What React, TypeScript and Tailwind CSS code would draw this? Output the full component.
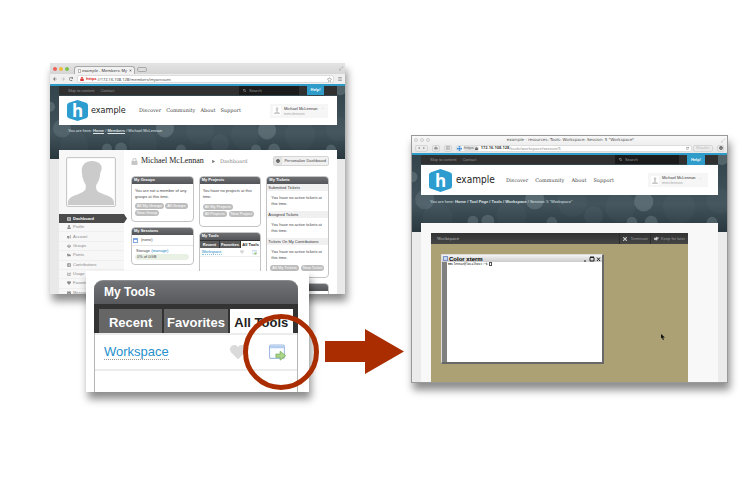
import type { ReactNode } from "react";
import {
  FaArrowLeft, FaArrowRight, FaBars, FaBullhorn, FaCaretDown, FaChartBar, FaCloud, FaCog, FaEnvelope, FaFolderOpen,
  FaHandPointRight, FaHeart, FaLock, FaPlay, FaRegStar, FaSearch, FaShareAltSquare, FaTimes, FaUser, FaUsers, FaRedo, FaGlobe,
} from "react-icons/fa";
import { FaTableCellsLarge } from "react-icons/fa6";

const sans = "font-['Liberation_Sans',Arial,sans-serif]";
const ui = "font-['Noto_Sans',sans-serif]";
const slab = "font-['DejaVu_Serif',serif]";

/* Out-of-focus light circles behind the site banner */
function Bokeh() {
  const dots: [number, number, number, number][] = [
    [12, 43, 9, 0.13], [0, 22, 5, 0.2], [24, 60, 14, 0.03], [57, 63, 5, 0.18], [71, 63, 6, 0.18], [93, 58, 14, 0.03],
    [115, 43, 9, 0.18], [131, 64, 5, 0.15], [150, 45, 14, 0.03], [170, 58, 9, 0.05], [195, 50, 14, 0.03],
    [217, 45, 9, 0.18], [206, 64, 5, 0.18], [224, 64, 6, 0.18], [250, 50, 15, 0.03], [281, 64, 5, 0.18], [290, 4, 7, 0.2], [288, 44, 12, 0.03],
  ];
  return (
    <svg className="absolute inset-0 size-full" viewBox="0 0 295 73" preserveAspectRatio="none" aria-hidden="true">
      <defs>
        <linearGradient id="sky" x1="0" y1="0" x2="0" y2="1">
          <stop offset="0" stopColor="#33434b" />
          <stop offset="0.65" stopColor="#43535b" />
          <stop offset="1" stopColor="#28373e" />
        </linearGradient>
      </defs>
      <rect width="295" height="73" fill="url(#sky)" />
      {dots.map(([x, y, r, o]) => (
        <circle key={`${x}-${y}`} cx={x} cy={y} r={r} fill="#c8dce2" fillOpacity={o} />
      ))}
    </svg>
  );
}

function Silhouette({ className }: { className: string }) {
  return (
    <svg className={className} viewBox="0 0 48 48" preserveAspectRatio="none" aria-hidden="true">
      <rect width="48" height="48" fill="#fff" />
      <path d="M25 2C17 2 13.500 8 14.500 14c.3 5 1.500 9 4 13 .5 5-1 6-4 8-6 3-14 4-14.500 10v3h48v-3c-.5-6-9-7-15-10-3-2-4-3-3.500-8 3-4 4-8 4.200-13C38 8 33 2 25 2z" fill="#cbcbcb" />
    </svg>
  );
}

function SiteBanner({ roomy, trail }: { roomy?: boolean; trail: ReactNode }) {
  return (
    <header className={`relative ${sans}`}>
      <Bokeh />
      <div className="relative border-t-2 border-[#2f9cca]">
        <div className={`ml-[9px] flex h-[9px] items-center bg-[#303030] pl-[9px] text-[4px] leading-none text-[#929292] ${roomy ? "mr-[9px]" : "mr-[8px]"}`}>
          <a href="#content">Skip to content</a>
          <a href="#contact" className="ml-[6px]">Contact</a>
          <label className={`ml-auto flex h-full items-center gap-[3px] bg-[#1b1b1b] pl-[4px] ${roomy ? "w-[64px]" : "w-[60px]"}`}>
            <FaSearch className="size-[3px] shrink-0" />
            <input aria-label="Search" placeholder="Search" className="w-full min-w-0 bg-transparent outline-none placeholder:text-[#929292]" />
          </label>
          <a href="#help" className={`mr-[13px] ml-[8px] flex h-[11px] items-center justify-center self-start bg-[#2f9cca] font-bold text-white ${roomy ? "-mt-px w-[18px]" : "-mt-[2px] w-[17px]"}`}>
            Help!
          </a>
        </div>
        <div className={`mt-px ml-[9px] flex items-center bg-white pl-[8px] ${roomy ? "mr-[9px] h-[30px] pr-[10px]" : "mr-[8px] h-[29px] pr-[9px]"}`}>
          <div className={`relative flex shrink-0 items-center justify-center ${roomy ? "size-[23px]" : "size-[21px]"}`}>
            <svg viewBox="0 0 22 22" className="absolute inset-0 size-full" aria-hidden="true">
              <path d="M11 0 20 3Q22 3.600 22 5.500v11Q22 18.400 20 19l-9 3-9-3Q0 18.400 0 16.500v-11Q0 3.600 2 3z" fill="#2d9ccf" />
            </svg>
            <span className="relative font-['Open_Sans',sans-serif] text-[17px] leading-none font-bold text-white">h</span>
          </div>
          <span className={`font-['DejaVu_Sans_Condensed',sans-serif] leading-none text-[#222] ${roomy ? "ml-[4px] w-[38px] text-[10px]" : "ml-[3px] w-[35px] text-[9px]"}`}>example</span>
          <nav className={`flex text-[5px] leading-none text-[#444] ${slab} ${roomy ? "ml-[12px] gap-[7px]" : "ml-[13px] gap-[5px]"}`}>
            <a href="#discover">Discover</a>
            <a href="#community">Community</a>
            <a href="#about">About</a>
            <a href="#support">Support</a>
          </nav>
          <button className={`ml-auto flex h-[14px] items-center bg-[#f6f6f6] pl-[3px] text-left text-[4px] leading-[5px] text-[#333] ${roomy ? "w-[60px]" : "w-[58px]"}`}>
            <Silhouette className="h-[9px] w-[8px] border border-white" />
            <span className="ml-[3px] whitespace-nowrap">
              Michael McLennan
              <span className="block text-[#aaa]">mmclennan</span>
            </span>
            <FaCaretDown className="mb-[4px] ml-[3px] size-[3px] text-[#ccc]" />
          </button>
        </div>
        <div className={`ml-[18px] flex items-center pb-px text-[4px] leading-none whitespace-nowrap text-[#dfe5e7] ${roomy ? "h-[14px]" : "h-[12px]"}`}>{trail}</div>
        <div className={roomy ? "h-[23px]" : "h-[22px]"} />
      </div>
    </header>
  );
}

function Card({ title, children, className = "" }: { title: string; children?: ReactNode; className?: string }) {
  return (
    <section className={`overflow-hidden rounded-[4px] border border-[#c4c4c4] bg-white ${className}`}>
      <h3 className="-mx-px -mt-px h-[8px] bg-linear-to-b from-[#727377] to-[#545559] pl-[3px] text-[4px] leading-[8px] font-bold text-white">{title}</h3>
      {children}
    </section>
  );
}

function Pill({ children }: { children: ReactNode }) {
  return <button className="h-[6px] rounded-full bg-[#bdbdbd] px-[2px] text-[4px] leading-[6px] whitespace-nowrap text-white">{children}</button>;
}

function TicketGroup({ title }: { title: string }) {
  return (
    <>
      <h4 className="h-[7px] bg-[#f0f0f0] pl-px text-[4px] leading-[7px] whitespace-nowrap text-[#333]">{title}</h4>
      <p className="h-[20px] pt-[4px] pl-[4px] leading-[6px]">You have no active tickets at this time.</p>
    </>
  );
}

const menu: [string, ReactNode][] = [
  ["Profile", <FaUser />], ["Account", <FaBullhorn />], ["Groups", <FaUsers />], ["Points", <FaFolderOpen />],
  ["Contributions", <FaShareAltSquare />], ["Usage", <FaChartBar />], ["Favorites", <FaHeart />], ["Messages", <FaEnvelope />],
];

function LaunchIcon({ className }: { className: string }) {
  return (
    <svg viewBox="0 0 16 16" className={className} aria-hidden="true">
      <rect x="0.500" y="1" width="14" height="12.500" rx="1" fill="#fbfdff" stroke="#9fbbe0" />
      <path d="M1 1.500h13v2.500H1z" fill="#b3cdf0" />
      <path d="M6.500 9.500h4V6.800L15.700 11l-5.200 4.200v-2.700h-4z" fill="#acd48a" stroke="#7fb25e" strokeWidth="0.800" />
    </svg>
  );
}

function MembersWindow() {
  return (
    <article className={`h-[231px] overflow-hidden bg-[#e9e9e9] shadow-[2px_7px_8px_rgba(0,0,0,0.45)] ${sans}`}>
      <div className={`bg-linear-to-b from-[#e4e4e4] to-[#c9c9c9] text-[4px] leading-none text-[#333] ${ui}`}>
        <div className="flex h-[11px] items-end gap-[2px] pl-[3px]">
          <i className="mb-[3px] size-[4px] rounded-full bg-[#ee6358]" />
          <i className="mb-[3px] size-[4px] rounded-full bg-[#f3b73d]" />
          <i className="mb-[3px] size-[4px] rounded-full bg-[#7fc24b]" />
          <div className="ml-[3px] flex h-[8px] items-center rounded-t-[3px] border border-b-0 border-[#a9a9a9] bg-[#f1f1f1] pl-[3px]">
            <span className="mr-px h-[4px] w-[3px] shrink-0 border border-[#bbb] bg-white" />
            <span className="whitespace-nowrap">example - Members: My</span>
            <FaTimes className="mx-[2px] size-[3px] shrink-0 text-[#777]" />
          </div>
          <span className="mb-[2px] h-[5px] w-[10px] rounded-[2px] border border-[#aaa] bg-[#dcdcdc]" />
          <span className="mr-[2px] mb-[3px] ml-auto text-[5px] text-[#777]">⤢</span>
        </div>
        <div className="flex h-[10px] items-center gap-[4px] bg-[#efefef] px-[3px] text-[5px] text-[#666]">
          <FaArrowLeft className="size-[4px]" />
          <FaArrowRight className="size-[4px] text-[#bbb]" />
          <FaRedo className="size-[4px]" />
          <div className="flex h-[8px] flex-1 items-center rounded-[2px] border border-[#ddd] bg-white pl-[2px] text-[4px]">
            <FaLock className="mr-[2px] size-[4px] text-[#d33]" />
            <span className="font-bold text-[#d33]">https</span>
            <input aria-label="Address" defaultValue="://172.16.108.128/members/myaccount" className="min-w-0 flex-1 bg-transparent text-[#444] outline-none" />
            <FaRegStar className="mr-px size-[5px] text-[#888]" />
          </div>
          <FaBars className="size-[4px]" />
        </div>
      </div>
      <SiteBanner
        trail={<>You are here:&nbsp;<a href="#home" className="font-bold underline">Home</a>&nbsp;/&nbsp;<a href="#members" className="font-bold underline">Members</a>&nbsp;/ Michael McLennan</>}
      />
      <div id="content" className="relative -mt-[9px] mr-[8px] ml-[9px] flex h-[150px] bg-white">
        <aside className="w-[65px] shrink-0 bg-[#f7f7f7] pt-[7px]">
          <Silhouette className="ml-[7px] h-[50px] w-[50px] rounded-[2px] border border-[#c9c9c9] p-px" />
          <nav className="mt-[7px] text-[4px] text-[#8a8a8a]">
            <a href="#dashboard" className="relative flex h-[9px] items-center gap-[2px] bg-[#4b4b4b] pl-[8px] font-bold text-white">
              <FaTableCellsLarge className="size-[4px]" /> Dashboard
              <svg className="absolute top-0 left-full h-[9px] w-[3px]" viewBox="0 0 3 9" aria-hidden="true"><path d="M0 0l3 4.500L0 9z" fill="#4b4b4b" /></svg>
            </a>
            <div className="grid h-[75px] auto-rows-fr">
              {menu.map(([name, icon]) => (
                <a key={name} href={`#${name}`} className="flex items-center gap-[2px] border-b border-[#efefef] pl-[8px]">
                  <span className="*:size-[4px]">{icon}</span>{name}
                </a>
              ))}
            </div>
          </nav>
        </aside>
        <div className="min-w-0 flex-1 pr-[8px] pl-[7px] text-[4px] leading-[6px] text-[#444]">
          <div className="flex h-[26px] items-center pb-[4px]">
            <FaLock className="size-[7px] text-[#c6c6c6]" />
            <h1 className="ml-[3px] w-[66px] font-['Liberation_Serif',serif] text-[8px] leading-none whitespace-nowrap text-[#222]">Michael McLennan</h1>
            <FaPlay className="ml-[5px] size-[3px] text-[#777]" />
            <h2 className={`ml-[5px] text-[5px] leading-none text-[#888] ${slab}`}>Dashboard</h2>
            <button className="ml-auto flex h-[10px] items-center rounded-[2px] border border-[#d5d5d5] bg-[#f1f1f1] text-[4px] whitespace-nowrap">
              <span className="flex h-full w-[8px] items-center justify-center bg-[#e2e2e2]"><FaCog className="size-[4px]" /></span>
              <span className="px-[2px]">Personalize Dashboard</span>
            </button>
          </div>
          <div className="grid grid-cols-3 items-start gap-[5px]">
            <div className="flex flex-col gap-[5px]">
              <Card title="My Groups" className="h-[46px]">
                <p className="px-[3px] pt-[4px] whitespace-nowrap">You are not a member of any<br />groups at this time.</p>
                <div className="flex flex-wrap gap-px pt-[3px] pl-[3px]"><Pill>All My Groups</Pill><Pill>All Groups</Pill><Pill>New Group</Pill></div>
              </Card>
              <Card title="My Sessions" className="h-[38px]">
                <div className="flex h-[11px] items-center gap-[3px] border-b border-[#e5e5e5] pl-px"><span className="size-[5px] border border-t-2 border-[#7fa7e6]" />(none)</div>
                <p className="pt-[2px] pl-[4px] leading-[6px]">Storage <a href="#manage" className="text-[#2389bf]">(manage)</a></p>
                <p className="mr-[4px] ml-[3px] rounded-full bg-[#e9f0e4] pl-[2px]">0% of 0GB</p>
              </Card>
            </div>
            <div className="flex flex-col gap-[5px]">
              <Card title="My Projects" className="h-[51px]">
                <p className="px-[3px] pt-[4px]">You have no projects at this time.</p>
                <div className="flex pt-[4px] pl-[3px]"><Pill>All My Projects</Pill></div>
                <div className="flex gap-[2px] pt-px pl-[3px]"><Pill>All Projects</Pill><Pill>New Project</Pill></div>
              </Card>
              <Card title="My Tools" className="h-[60px]">
                <div className="flex h-[8px] gap-px bg-[#333] pt-px text-center text-[4px] leading-[7px] font-bold text-white">
                  <span className="flex-1 bg-[#5c5c5c]">Recent</span><span className="flex-1 bg-[#5c5c5c]">Favorites</span><span className="flex-1 bg-white text-[#222]">All Tools</span>
                </div>
                <div className="flex h-[9px] items-center border-b border-[#eee] pr-[3px] pl-[2px]">
                  <a href="#workspace" className="border-b border-dotted border-[#8dc3df] leading-[4px] text-[#2389bf]">Workspace</a>
                  <FaHeart className="mr-[8px] ml-auto size-[4px] text-[#d6d6d6]" />
                  <LaunchIcon className="size-[5px]" />
                </div>
              </Card>
            </div>
            <div className="flex flex-col gap-[5px]">
              <Card title="My Tickets" className="h-[102px]">
                <TicketGroup title="Submitted Tickets" /><TicketGroup title="Assigned Tickets" /><TicketGroup title="Tickets On My Contributions" />
                <div className="flex gap-[2px] pl-[3px]"><Pill>All My Tickets</Pill><Pill>New Ticket</Pill></div>
              </Card>
              <Card title="" className="h-[40px]" />
            </div>
          </div>
        </div>
      </div>
    </article>
  );
}

/* Enlarged view of the tool list, with the launch icon ringed */
function ToolsCallout() {
  return (
    <aside className={`absolute top-[208px] left-[36px] w-[223px] bg-white pt-[9px] pr-[11px] pl-[8px] shadow-[2px_7px_8px_rgba(0,0,0,0.45)] ${sans}`}>
      <div className="h-[112px] rounded-t-[9px] border-x border-[#b5b5b5]">
        <h2 className="-mx-px h-[24px] rounded-t-[9px] border-t border-[#8a8b8e] bg-linear-to-b from-[#727377] to-[#58595d] pl-[10px] text-[12px] leading-[23px] font-bold text-white">My Tools</h2>
        <div className="-mx-px flex h-[29px] gap-[2px] bg-[#333] px-[5px] pt-[5px] text-[13px] leading-[28px] font-bold text-white">
          <button className="flex-1 bg-[#666]">Recent</button>
          <button className="flex-1 bg-[#666]">Favorites</button>
          <button className="flex-1 bg-white text-[#222]">All Tools</button>
        </div>
        <div className="flex h-[38px] items-center border-y-2 border-[#ececec] pr-[11px] pl-[9px]">
          <a href="#workspace" className="border-b border-dotted border-[#999] text-[13px] leading-[15px] text-[#2590cc]">Workspace</a>
          <FaHeart className="mr-[23px] ml-auto size-[16px] text-[#dadada]" />
          <LaunchIcon className="size-[17px]" />
        </div>
      </div>
      <span className="absolute top-[43px] left-[157px] size-[76px] rounded-full border-[5px] border-[#a92d00]" />
    </aside>
  );
}

function WorkspaceWindow() {
  return (
    <article className={`mt-[72px] h-[248px] overflow-hidden border border-[#999] bg-[#ebebeb] shadow-[2px_7px_8px_rgba(0,0,0,0.45)] ${sans}`}>
      <div className={`h-[17px] bg-linear-to-b from-[#f8f8f8] to-[#e6e6e6] text-[4px] leading-none text-[#555] ${ui}`}>
        <div className="flex h-[8px] items-center gap-[2px] pl-[2px]">
          <i className="size-[4px] rounded-full border border-[#ccc]" />
          <i className="size-[4px] rounded-full border border-[#ccc]" />
          <i className="size-[4px] rounded-full border border-[#ccc]" />
          <p className="flex-1 pr-[10px] text-center font-['DejaVu_Sans',sans-serif] whitespace-nowrap">example - resources: Tools: Workspace: Session: 5 "Workspace"</p>
          <span className="mr-[2px] text-[5px] text-[#999]">⤢</span>
        </div>
        <div className="flex h-[9px] items-center gap-[4px] px-[3px] pb-px">
          <span className="flex h-[7px] w-[13px] items-center justify-around rounded-[2px] border border-[#d5d5d5] text-[#999]"><FaPlay className="size-[2px] rotate-180" /><FaPlay className="size-[2px]" /></span>
          <span className="flex h-[7px] w-[8px] items-center justify-center rounded-[2px] border border-[#d5d5d5]"><FaCloud className="size-[4px] text-[#999]" /></span>
          <span className="flex h-[7px] w-[8px] items-center justify-center rounded-[2px] border border-[#d5d5d5]"><FaShareAltSquare className="size-[4px] text-[#aaa]" /></span>
          <div className="flex h-[7px] min-w-0 flex-1 items-center rounded-[2px] border border-[#ddd] bg-white">
            <FaGlobe className="size-[5px] shrink-0 text-[#277dd0]" />
            <span className="ml-px flex h-[5px] items-center gap-px rounded-[2px] bg-[#e3e3e3] px-px">https <FaLock className="size-[3px]" /></span>
            <span className="ml-[2px] font-bold text-[#444]">172.16.108.128</span>
            <input aria-label="Page address" defaultValue="/tools/workspace/session/5" className="min-w-0 flex-1 bg-transparent text-[#888] outline-none" />
            <FaRedo className="mr-[2px] size-[3px] text-[#777]" />
          </div>
          <button className="-ml-[3px] h-[7px] w-[20px] rounded-[2px] border border-[#d5d5d5] leading-[4px] text-[#bbb]">Reader</button>
          <button aria-label="Settings" className="flex h-[7px] w-[7px] items-center justify-center rounded-[2px] border border-[#d5d5d5]"><FaCog className="size-[4px]" /></button>
        </div>
      </div>
      <SiteBanner
        roomy
        trail={<>You are here:&nbsp;<span className="font-bold">Home / Tool Page / Tools / Workspace</span>&nbsp;/ Session: 5 "Workspace"</>}
      />
      <div className="relative -mt-[9px] mr-[9px] ml-[9px] h-[170px] bg-[#f8f8f8] pt-[10px] pr-[30px] pl-[10px]">
        <div className="flex h-[11px] items-center bg-linear-to-b from-[#333] to-[#454545] pl-[6px] text-[4px] leading-none text-[#b5b5b5]">
          <h2 className={slab}>Workspace</h2>
          <button className="ml-auto flex h-full items-center gap-[2px] border-l border-[#2c2c2c] px-[2px] text-[#999]"><FaTimes className="size-[6px] text-[#ccc]" />Terminate</button>
          <button className="flex h-full items-center gap-[2px] border-l border-[#2c2c2c] px-[3px] text-[#999]"><FaHandPointRight className="size-[5px] text-[#ccc]" />Keep for later</button>
        </div>
        <div className="relative h-[150px] bg-[#aca075] pt-[10px] pl-[10px]">
          <section className="flex h-[110px] w-[163px] flex-col border-t border-r-2 border-b-2 border-l border-t-[#ddd] border-r-[#686868] border-b-[#686868] border-l-[#ddd] bg-white">
            <div className="flex h-[7px] shrink-0 items-center gap-px bg-linear-to-b from-[#f4f4f4] to-[#ccc] px-px text-black">
              <i className="size-[5px] border border-[#7b93c4] bg-[#ccd8f0]" />
              <span className="text-[6px] leading-none font-bold">Color xterm</span>
              <svg className="ml-auto h-[6px] w-[19px]" viewBox="0 0 19 6" fill="none" stroke="#222" aria-hidden="true">
                <path d="M2 5h2M8 1.500h4v3.500H8zM8 1h4M15 1.500l3 3.500M18 1.500l-3 3.500" />
              </svg>
            </div>
            <div className="flex-1 border-l-[5px] border-[#808080] pl-px font-['Liberation_Mono',monospace] text-[3px] leading-[5px] text-black">
              mmclennan@localhost:~$ <span className="inline-block h-[4px] w-[3px] border border-[#555] align-top" />
            </div>
          </section>
          <svg className="absolute top-[90px] left-[230px] h-[6px] w-[4px]" viewBox="0 0 4 6" aria-hidden="true">
            <path d="M0 0v4.500l1-1L2 6l1-.5-1-2h2z" fill="#111" />
          </svg>
        </div>
      </div>
    </article>
  );
}

export default function App() {
  return (
    <main className="grid min-h-screen grid-cols-[295fr_66fr_317fr] items-start bg-white pt-[63px] pr-[22px] pb-[100px] pl-[50px]">
      <div className="relative min-w-0">
        <MembersWindow />
        <ToolsCallout />
      </div>
      <svg className="mt-[266px] -ml-[20px] h-[45px] w-[79px]" viewBox="0 0 79 45" role="img" aria-label="Opens">
        <path d="M0 12h40V0l39 22.500L40 45V33H0z" fill="#a92d00" />
      </svg>
      <WorkspaceWindow />
    </main>
  );
}
